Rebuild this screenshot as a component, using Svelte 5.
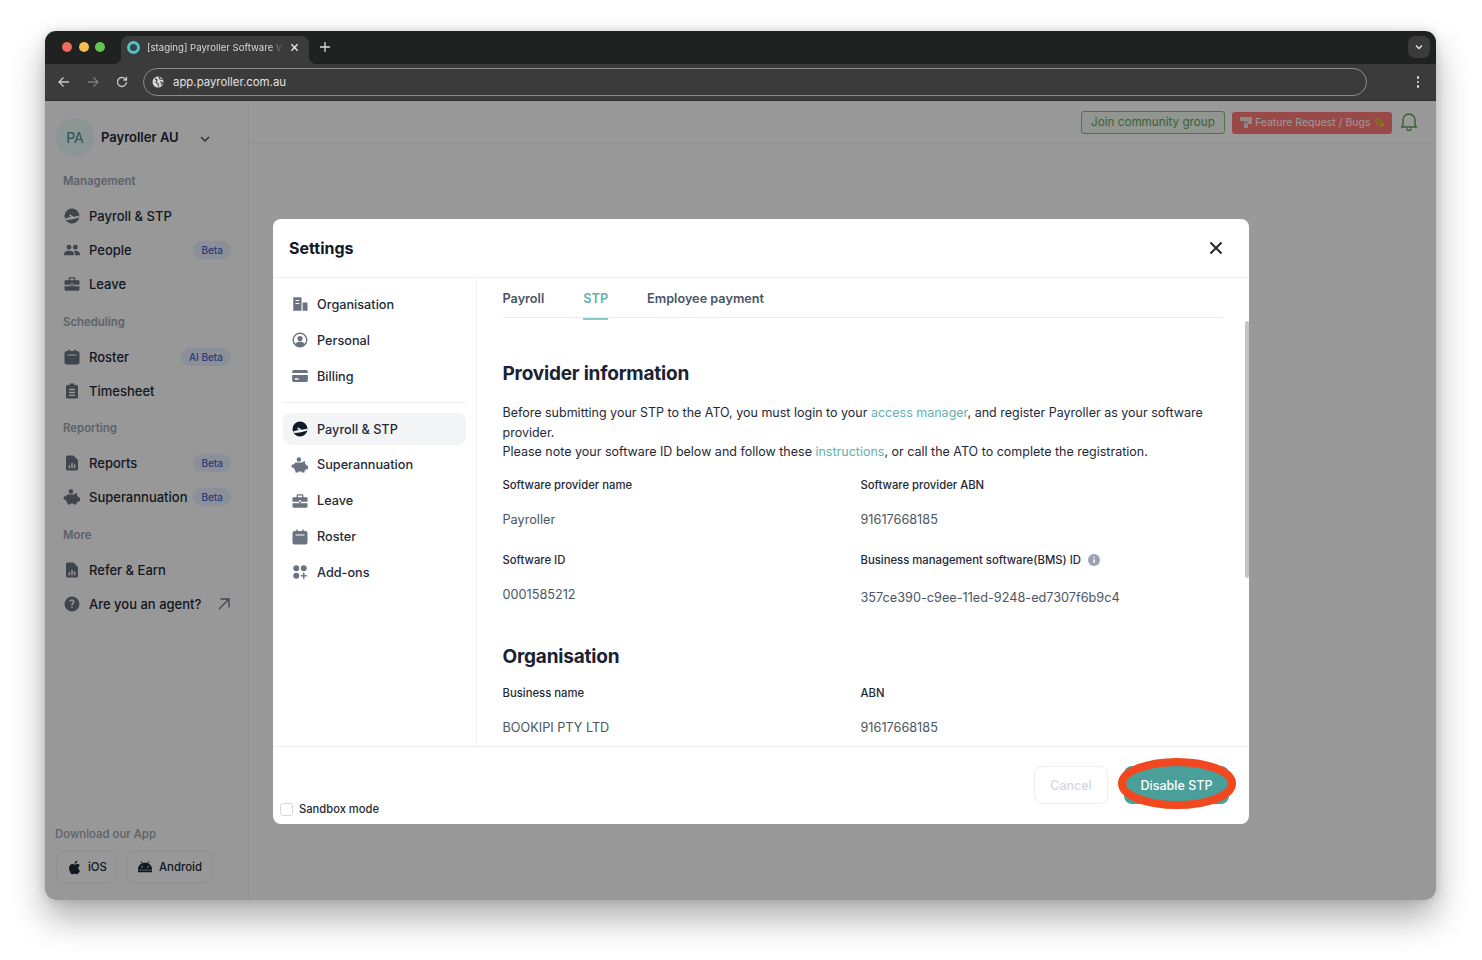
<!--
  App.svelte — Payroller settings dialog inside a browser window.
-->
<script>
  const icons = {
    stp: 'M12 2a10 10 0 1 0 0 20 10 10 0 0 0 0-20zM2.800 15.200c2.700-.8 5.200-1.400 7.700-1.800L8 10.700l2-.6 4 2.800 7.600-1.400c.2.800.1 1.700-.1 2.400-5.500 1.800-11.500 3-17.500 3.300-.5-.7-.9-1.500-1.200-2z',
    people: 'M8 5a3.200 3.200 0 1 1 0 6.400A3.200 3.200 0 0 1 8 5zm8.500 0a3.200 3.200 0 1 1 0 6.400 3.200 3.200 0 0 1 0-6.400zM1.500 19v-2.200c0-2.300 3-3.900 6.500-3.900s6.500 1.600 6.500 3.900V19zm14.500 0v-2.200c0-1.500-.7-2.700-1.800-3.600 3.700-.8 8.300.8 8.300 3.600V19z',
    leave: 'M9 3h6a1.500 1.500 0 0 1 1.500 1.500V7H21a1 1 0 0 1 1 1v5H2V8a1 1 0 0 1 1-1h4.500V4.500A1.500 1.500 0 0 1 9 3zm.3 1.800V7h5.400V4.800zM10.500 11v3.500h3V11zM2 15h20v4a2 2 0 0 1-2 2H4a2 2 0 0 1-2-2z',
    roster: 'M7 2h2v2h6V2h2v2h2a3 3 0 0 1 3 3v12a3 3 0 0 1-3 3H5a3 3 0 0 1-3-3V7a3 3 0 0 1 3-3h2zM6 8.500V10h12V8.500z',
    sheet: 'M9 2h6v2h3a2 2 0 0 1 2 2v14a2 2 0 0 1-2 2H6a2 2 0 0 1-2-2V6a2 2 0 0 1 2-2h3zM8 9v2h8V9zm0 4v2h8v-2zm0 4v1.500h8V17z',
    report: 'M6 2h8l6 6v12a2 2 0 0 1-2 2H6a2 2 0 0 1-2-2V4a2 2 0 0 1 2-2zm1.500 13v4h2v-4zm3.500-3v7h2v-7zm3.500 2v5h2v-5z',
    piggy: 'M10.500 1.500a3 3 0 1 1 0 6 3 3 0 0 1 0-6zM6.500 8.500h8c1.200-1 2.700-1.500 4.500-1.500l-.4 3c1 .8 1.700 1.600 2 2.500h2v5h-2.500c-.6 1-1.300 1.700-2.100 2.300V22h-4v-1.500h-4V22h-4v-2.500C4.800 18.500 4 17 3.800 15.500H1c-.6-1.500-.2-3.500 1-5l1.500 1.300C4.200 10 5.200 9 6.500 8.500z',
    help: 'M12 2a10 10 0 1 0 0 20 10 10 0 0 0 0-20zm-1 15v-2h2v2zm3.700-6.500c-.7 1-1.700 1.300-1.700 2.900h-2c0-2.500 1.300-3 2-3.800.7-.9.1-2.100-1-2.100-1 0-1.600.6-1.800 1.600l-1.900-.7C8.700 6.800 10.100 6 12 6c3 0 4.200 2.700 2.700 4.500z',
    building: 'M3 3h11v18H3zm3 3.500V8h5V6.500zm0 4V12h5v-1.500zM15.500 10H21a1 1 0 0 1 1 1v10h-6.500z',
    user: 'M12 2a10 10 0 1 0 0 20 10 10 0 0 0 0-20zm0 2a8 8 0 0 1 6.300 12.900C16.700 15 14.500 14.200 12 14.200S7.300 15 5.700 16.900A8 8 0 0 1 12 4zm0 2.500a3.500 3.500 0 1 0 0 7 3.500 3.500 0 0 0 0-7z',
    card: 'M4 4h16a2.500 2.500 0 0 1 2.500 2.500V8h-21V6.500A2.500 2.500 0 0 1 4 4zM1.500 10.500h21v7A2.500 2.500 0 0 1 20 20H4a2.500 2.500 0 0 1-2.500-2.500zM5 15v2h5v-2z',
    addons: 'M7 3a4 4 0 1 1 0 8 4 4 0 0 1 0-8zm10 0a4 4 0 1 1 0 8 4 4 0 0 1 0-8zM7 13a4 4 0 1 1 0 8 4 4 0 0 1 0-8zm9 0h2v3h3v2h-3v3h-2v-3h-3v-2h3z',
    apple: 'M16.500 1c.1 1.300-.4 2.500-1.200 3.400-.8 1-2 1.700-3.200 1.600-.2-1.200.4-2.500 1.100-3.300C14 1.800 15.400 1.100 16.500 1zM20.700 17c-.5 1.200-.8 1.700-1.400 2.700-.9 1.400-2.100 3-3.600 3-1.300 0-1.700-.8-3.500-.8s-2.200.8-3.500.8c-1.500 0-2.700-1.500-3.500-2.900C3 15.900 2.700 11.400 4.300 9.100 5.400 7.500 7.100 6.500 8.700 6.500s2.700.9 4 .9 2.100-.9 4-.9c1.400 0 2.900.8 4 2.100-3.500 1.900-2.900 6.900 0 8.400z',
    android: 'M6.500 3l1.900 3.100A10 10 0 0 1 12 5.500c1.300 0 2.500.2 3.600.6L17.500 3l1 .6-1.800 3A9.500 9.500 0 0 1 22.500 16h-21a9.500 9.500 0 0 1 5.800-9.400l-1.800-3zM7.500 10.500a1.200 1.200 0 1 0 0 2.400 1.200 1.200 0 0 0 0-2.400zm9 0a1.200 1.200 0 1 0 0 2.400 1.200 1.200 0 0 0 0-2.400zM1.500 17h21v3h-21z'
  };

  const sideNav = [
    { label: 'Management', items: [
      { name: 'Payroll & STP', icon: 'stp' },
      { name: 'People', icon: 'people', badge: 'Beta' },
      { name: 'Leave', icon: 'leave' }
    ] },
    { label: 'Scheduling', items: [
      { name: 'Roster', icon: 'roster', badge: 'AI Beta' },
      { name: 'Timesheet', icon: 'sheet' }
    ] },
    { label: 'Reporting', items: [
      { name: 'Reports', icon: 'report', badge: 'Beta' },
      { name: 'Superannuation', icon: 'piggy', badge: 'Beta' }
    ] },
    { label: 'More', items: [
      { name: 'Refer & Earn', icon: 'report' },
      { name: 'Are you an agent?', icon: 'help', external: true }
    ] }
  ];

  const settingsTop = [
    { name: 'Organisation', icon: 'building' },
    { name: 'Personal', icon: 'user' },
    { name: 'Billing', icon: 'card' }
  ];

  const settingsBottom = [
    { name: 'Payroll & STP', icon: 'stp', active: true },
    { name: 'Superannuation', icon: 'piggy' },
    { name: 'Leave', icon: 'leave' },
    { name: 'Roster', icon: 'roster' },
    { name: 'Add-ons', icon: 'addons' }
  ];

  let tab = $state('STP');
</script>

{#snippet icon(name, size)}
  <svg class="ico" width={size} height={size} viewBox="0 0 24 24" aria-hidden="true">
    <path d={icons[name]} fill="currentColor" fill-rule="evenodd" />
  </svg>
{/snippet}

{#snippet settingsRow(item)}
  <div class="set-row" class:active={item.active}>
    <span class="set-ico">{@render icon(item.icon, 18)}</span>
    <span>{item.name}</span>
  </div>
{/snippet}

<div class="window">
  <div class="tabbar">
    <div class="lights">
      <i class="red"></i><i class="yellow"></i><i class="green"></i>
    </div>
    <div class="tab">
      <span class="favicon"></span>
      <span class="tab-title">[staging] Payroller Software W</span>
      <svg width="9" height="9" viewBox="0 0 10 10"><path d="M1.500 1.500l7 7m0-7l-7 7" stroke="#e8e8e8" stroke-width="1.500" /></svg>
    </div>
    <svg class="plus" width="10" height="10" viewBox="0 0 10 10"><path d="M5 0v10M0 5h10" stroke="#dcdcdc" stroke-width="1.300" /></svg>
    <div class="tab-menu">
      <svg width="8" height="6" viewBox="0 0 8 6"><path d="M1 1.500l3 3 3-3" fill="none" stroke="#e4e4e4" stroke-width="1.400" /></svg>
    </div>
  </div>

  <div class="toolbar">
    <svg width="14" height="14" viewBox="0 0 14 14"><path d="M12 7H2m4.500-4.500L2 7l4.500 4.500" fill="none" stroke="#c8c8c8" stroke-width="1.300" /></svg>
    <svg width="14" height="14" viewBox="0 0 14 14"><path d="M2 7h10M7.500 2.500L12 7l-4.500 4.500" fill="none" stroke="#7d7d7d" stroke-width="1.300" /></svg>
    <svg width="14" height="14" viewBox="0 0 14 14"><path d="M11.500 7a4.500 4.500 0 1 1-1.300-3.200L11.500 5M11.500 1.800V5H8.300" fill="none" stroke="#c8c8c8" stroke-width="1.300" /></svg>
    <div class="urlbar">
      <svg width="12" height="12" viewBox="0 0 12 12"><circle cx="6" cy="6" r="5.500" fill="#d6d6d6" /><path d="M3 2.500l2 1.500-1 2.500 2 1 .5 3M7 1l1 2 2.500.5M8 6l2.500.5-1 2.500" fill="none" stroke="#3b3b3b" stroke-width="1.100" /></svg>
      <span>app.payroller.com.au</span>
    </div>
    <div class="kebab"><i></i><i></i><i></i></div>
  </div>

  <div class="app">
    <aside class="sidebar">
      <div class="org">
        <span class="avatar">PA</span>
        <span class="org-name">Payroller AU</span>
        <svg class="org-caret" width="10" height="6" viewBox="0 0 10 6"><path d="M1 1l4 4 4-4" fill="none" stroke="#4b5563" stroke-width="1.500" /></svg>
      </div>

      {#each sideNav as group}
        <div class="side-label">{group.label}</div>
        <div class="side-group">
          {#each group.items as item}
            <div class="side-row">
              <span class="side-ico">{@render icon(item.icon, 18)}</span>
              <span class="side-name">{item.name}</span>
              {#if item.badge}<span class="badge">{item.badge}</span>{/if}
              {#if item.external}
                <svg class="ext" width="12" height="12" viewBox="0 0 12 12"><path d="M1 11L11 1M2.500 1H11v8.500" fill="none" stroke="#6b7280" stroke-width="1.300" /></svg>
              {/if}
            </div>
          {/each}
        </div>
      {/each}

      <div class="download">
        <div class="dl-label">Download our App</div>
        <div class="dl-row">
          <span class="dl-btn ios">{@render icon('apple', 15)} iOS</span>
          <span class="dl-btn android">{@render icon('android', 16)} Android</span>
        </div>
      </div>
    </aside>

    <main class="main">
      <div class="topbar">
        <span class="join">Join community group</span>
        <span class="feature">
          <svg width="12" height="11" viewBox="0 0 12 11"><path d="M0 0h12v7H8v4H4V4H0z" fill="#f4e4e2" /><path d="M4 4h4v3H4z" fill="#e6bfbc" /></svg>
          Feature Request / Bugs
          <svg width="11" height="11" viewBox="0 0 11 11"><ellipse cx="5.500" cy="5.500" rx="5.500" ry="3" transform="rotate(40 5.500 5.500)" fill="#f2b64a" /><path d="M3 5l2.500-2M5 7.500l3-3" stroke="#8a5a20" stroke-width="0.800" /></svg>
        </span>
        <svg class="bell" width="18" height="19" viewBox="0 0 18 19"><path d="M3 13.500V8a6 6 0 0 1 12 0v5.500l1.500 1.500h-15zM7 16.500a2 2 0 0 0 4 0" fill="none" stroke="#5fa35f" stroke-width="1.500" stroke-linejoin="round" /></svg>
      </div>
    </main>

    <div class="overlay">
      <div class="modal">
        <header class="modal-head">
          <h1>Settings</h1>
          <svg width="14" height="14" viewBox="0 0 14 14"><path d="M1.500 1.500l11 11m0-11l-11 11" stroke="#1f2937" stroke-width="2" /></svg>
        </header>

        <div class="modal-body">
          <nav class="set-nav">
            <div class="set-group">
              {#each settingsTop as item}{@render settingsRow(item)}{/each}
            </div>
            <div class="set-group lower">
              {#each settingsBottom as item}{@render settingsRow(item)}{/each}
            </div>
          </nav>

          <section class="panel">
            <div class="tabs">
              {#each ['Payroll', 'STP', 'Employee payment'] as t}
                <button class="tab-btn" class:on={tab === t} onclick={() => (tab = t)}>{t}</button>
              {/each}
            </div>

            <h2 class="first">Provider information</h2>
            <p class="intro">
              Before submitting your STP to the ATO, you must login to your <a href="#top">access manager</a>, and register Payroller as your software provider.<br />
              Please note your software ID below and follow these <a href="#top">instructions</a>, or call the ATO to complete the registration.
            </p>

            <div class="fields">
              <div class="field">
                <div class="f-label">Software provider name</div>
                <div class="f-value">Payroller</div>
              </div>
              <div class="field">
                <div class="f-label">Software provider ABN</div>
                <div class="f-value">91617668185</div>
              </div>
              <div class="field">
                <div class="f-label">Software ID</div>
                <div class="f-value">0001585212</div>
              </div>
              <div class="field">
                <div class="f-label">
                  Business management software(BMS) ID
                  <svg width="12" height="12" viewBox="0 0 12 12"><circle cx="6" cy="6" r="6" fill="#9ca3af" /><path d="M6 5.300v3.700M6 2.800v1.300" stroke="#fff" stroke-width="1.400" /></svg>
                </div>
                <div class="f-value lowered">357ce390-c9ee-11ed-9248-ed7307f6b9c4</div>
              </div>
            </div>

            <h2>Organisation</h2>
            <div class="fields">
              <div class="field">
                <div class="f-label">Business name</div>
                <div class="f-value">BOOKIPI PTY LTD</div>
              </div>
              <div class="field">
                <div class="f-label">ABN</div>
                <div class="f-value">91617668185</div>
              </div>
            </div>

            <div class="thumb"></div>
          </section>
        </div>

        <footer class="modal-foot">
          <label class="sandbox"><span class="check"></span>Sandbox mode</label>
          <div class="actions">
            <button class="cancel">Cancel</button>
            <button class="disable">
              Disable STP
              <svg class="ring" width="120" height="54" viewBox="0 0 120 54"><ellipse cx="60" cy="26.500" rx="55" ry="21.500" fill="none" stroke="#f2471f" stroke-width="8" /></svg>
            </button>
          </div>
        </footer>
      </div>
    </div>
  </div>
</div>

<style>
  :global(body) {
    background: #fff;
    font-family: Inter, "Liberation Sans", sans-serif;
  }

  .window {
    width: 1391px;
    height: 869px;
    margin: 31px 0 60px 45px;
    border-radius: 11px;
    overflow: hidden;
    display: flex;
    flex-direction: column;
    box-shadow: 0 18px 34px rgba(0, 0, 0, 0.32), 0 0 10px rgba(0, 0, 0, 0.14);
  }

  /* browser chrome */
  .tabbar {
    height: 33px;
    flex: none;
    background: #202221;
    display: flex;
    align-items: flex-end;
    position: relative;
  }

  .lights {
    display: flex;
    gap: 6.5px;
    padding: 0 0 12px 17px;
    width: 76px;
    box-sizing: border-box;
  }

  .lights i {
    width: 10px;
    height: 10px;
    border-radius: 50%;
  }

  .red { background: #ee6a5f; }
  .yellow { background: #f5bd4f; }
  .green { background: #62c554; }

  .tab {
    position: relative;
    width: 188px;
    height: 28px;
    background: #3b3b3b;
    border-radius: 8px 8px 0 0;
    display: flex;
    align-items: center;
    padding: 0 8px 6px 6px;
    box-sizing: border-box;
    gap: 7px;
  }

  .tab::before,
  .tab::after {
    content: "";
    position: absolute;
    bottom: 0;
    width: 8px;
    height: 8px;
  }

  .tab::before {
    left: -8px;
    background: radial-gradient(circle at 0 0, transparent 8px, #3b3b3b 8.5px);
  }

  .tab::after {
    right: -8px;
    background: radial-gradient(circle at 100% 0, transparent 8px, #3b3b3b 8.5px);
  }

  .favicon {
    width: 13px;
    height: 13px;
    border-radius: 50%;
    border: 3.5px solid #56c1c4;
    background: #33474a;
    box-sizing: border-box;
    flex: none;
  }

  .tab-title {
    font-size: 9.6px;
    color: #d8d8d8;
    white-space: nowrap;
    width: 136px;
    flex: none;
    overflow: hidden;
    -webkit-mask-image: linear-gradient(to right, #000 90%, transparent);
    mask-image: linear-gradient(to right, #000 90%, transparent);
  }

  .plus {
    margin: 0 0 12px 11px;
  }

  .tab-menu {
    position: absolute;
    right: 6px;
    top: 5px;
    width: 22px;
    height: 22px;
    border-radius: 7px;
    background: #3b3b3b;
    display: flex;
    align-items: center;
    justify-content: center;
  }

  .toolbar {
    height: 37px;
    flex: none;
    background: #3b3b3b;
    display: flex;
    align-items: center;
    padding: 0 16px 0 12px;
    box-sizing: border-box;
    gap: 15px;
    border-bottom: 1px solid #2f2f2f;
  }

  .urlbar {
    width: 1224px;
    height: 28px;
    border: 1px solid #8c8c8c;
    border-radius: 14px;
    box-sizing: border-box;
    display: flex;
    align-items: center;
    gap: 9px;
    padding-left: 8px;
    margin-left: -1px;
    font-size: 11.4px;
    color: #e2e2e2;
  }

  .kebab {
    margin-left: auto;
    display: flex;
    flex-direction: column;
    gap: 2px;
    padding-right: 1px;
  }

  .kebab i {
    width: 2.5px;
    height: 2.5px;
    border-radius: 50%;
    background: #dcdcdc;
  }

  /* app behind the dialog */
  .app {
    flex: 1;
    display: flex;
    position: relative;
    background: #fff;
    min-height: 0;
  }

  .sidebar {
    width: 204px;
    flex: none;
    box-sizing: border-box;
    border-right: 1px solid #f0f0f0;
    padding: 17px 0 17px 11px;
    display: flex;
    flex-direction: column;
    background: #fdfdfd;
  }

  .org {
    display: flex;
    align-items: center;
    height: 38px;
    margin-bottom: 15px;
  }

  .avatar {
    width: 38px;
    height: 38px;
    border-radius: 50%;
    background: #e8f8f6;
    color: #3f8f85;
    font-size: 14px;
    display: flex;
    align-items: center;
    justify-content: center;
    margin-right: 7px;
  }

  .org-name {
    font-size: 13px;
    font-weight: 600;
    color: #1f2937;
    margin-right: 21px;
  }

  .org-caret {
    margin-top: 3px;
  }

  .side-label {
    height: 19px;
    padding-top: 1px;
    line-height: 19px;
    font-size: 11.4px;
    font-weight: 600;
    color: #9ca3af;
    margin: 0 0 8px 7px;
  }

  .side-group {
    margin-bottom: 10.5px;
  }

  .side-row {
    height: 34px;
    display: flex;
    align-items: center;
    padding: 0 17px 0 7px;
    font-size: 13px;
    font-weight: 500;
    color: #1f2937;
  }

  .side-ico {
    display: flex;
    color: #6b7280;
    margin-right: 8px;
  }

  .side-name {
    white-space: nowrap;
  }

  .badge {
    margin-left: auto;
    height: 18px;
    line-height: 18px;
    padding: 0 8px;
    border-radius: 9px;
    background: #e6eeff;
    color: #4a64c8;
    font-size: 10px;
    font-weight: 500;
    white-space: nowrap;
  }

  .ext {
    margin-left: auto;
    margin-right: 1px;
  }

  .download {
    margin-top: auto;
  }

  .dl-label {
    font-size: 11.4px;
    font-weight: 500;
    color: #9ca3af;
    margin: 0 0 10px -1px;
  }

  .dl-row {
    display: flex;
    gap: 9px;
  }

  .dl-btn {
    height: 32px;
    box-sizing: border-box;
    border: 1px solid #f0f0f0;
    border-radius: 8px;
    display: flex;
    align-items: center;
    gap: 6px;
    font-size: 11.4px;
    font-weight: 500;
    color: #1f2937;
  }

  .ios {
    width: 61px;
    padding-left: 10px;
  }

  .android {
    width: 86px;
    padding-left: 10px;
  }

  .main {
    flex: 1;
    background: #fff;
  }

  .topbar {
    height: 43px;
    box-sizing: border-box;
    border-bottom: 1px solid #f3f3f3;
    display: flex;
    align-items: center;
    justify-content: flex-end;
    padding: 1px 18px 0 0;
  }

  .join {
    height: 23px;
    line-height: 21px;
    box-sizing: border-box;
    padding: 0 9.5px;
    border: 1px solid #7fc07f;
    background: #f3fbf0;
    border-radius: 3px;
    color: #5fa85a;
    font-size: 11.7px;
    margin-right: 7px;
  }

  .feature {
    height: 22px;
    box-sizing: border-box;
    padding: 0 7.5px;
    background: #ff7b77;
    border-radius: 3px;
    color: #fff;
    font-size: 10.5px;
    display: flex;
    align-items: center;
    gap: 3px;
    margin-right: 8px;
  }

  .bell {
    margin-top: -2px;
  }

  .overlay {
    position: absolute;
    inset: 0;
    background: rgba(0, 0, 0, 0.4);
    padding: 118px 0 0 228px;
  }

  /* dialog */
  .modal {
    width: 976px;
    height: 605px;
    background: #fff;
    border-radius: 8px;
    display: flex;
    flex-direction: column;
    overflow: hidden;
  }

  .modal-head {
    height: 59px;
    flex: none;
    box-sizing: border-box;
    padding: 0 26px 0 16px;
    border-bottom: 1px solid #f0f0f2;
    display: flex;
    align-items: center;
    justify-content: space-between;
  }

  h1 {
    margin: 0;
    font-size: 16px;
    font-weight: 700;
    color: #111827;
  }

  .modal-body {
    height: 468px;
    flex: none;
    display: flex;
    overflow: hidden;
  }

  .set-nav {
    width: 204px;
    flex: none;
    box-sizing: border-box;
    border-right: 1px solid #f0f0f2;
    padding: 8px 10px 0;
  }

  .set-group.lower {
    border-top: 1px solid #eceef0;
    margin-top: 8px;
    padding-top: 10px;
  }

  .set-row {
    height: 36px;
    display: flex;
    align-items: center;
    padding-left: 8px;
    font-size: 12.7px;
    font-weight: 500;
    color: #1f2937;
    border-radius: 8px;
  }

  .lower .set-row:not(.active) {
    height: 35.85px;
  }

  .set-row.active {
    height: 32px;
    margin-bottom: 2px;
    background: #f3f4f6;
  }

  .set-ico {
    display: flex;
    color: #6b7280;
    margin-right: 8px;
  }

  .set-row.active .set-ico {
    color: #111827;
  }

  .panel {
    flex: 1;
    position: relative;
    padding: 0 26px 0 25.5px;
    min-width: 0;
  }

  .tabs {
    display: flex;
    gap: 39px;
    height: 39px;
    border-bottom: 1px solid #e8eaed;
  }

  .tab-btn {
    all: unset;
    position: relative;
    height: 39px;
    line-height: 42px;
    font-size: 12.7px;
    font-weight: 600;
    color: #4b5563;
    cursor: pointer;
  }

  .tab-btn.on {
    color: #5fb3ad;
  }

  .tab-btn.on::after {
    content: "";
    position: absolute;
    left: 0;
    right: 0;
    bottom: -3px;
    height: 2px;
    background: #8accc6;
  }

  h2 {
    margin: 32px 0 0;
    height: 26px;
    line-height: 26px;
    font-size: 19px;
    font-weight: 700;
    color: #1a2233;
    letter-spacing: -0.2px;
  }

  h2.first {
    margin-top: 43px;
  }

  .intro {
    margin: 16px 0 0;
    font-size: 12.5px;
    line-height: 19.5px;
    color: #1f2937;
  }

  .intro a {
    color: #5fb3ad;
    text-decoration: none;
  }

  .fields {
    display: grid;
    grid-template-columns: 358px 1fr;
    margin-top: 13px;
  }

  .field {
    height: 75px;
  }

  .f-label {
    height: 20px;
    line-height: 20px;
    font-size: 11.3px;
    font-weight: 500;
    color: #1f2937;
    display: flex;
    align-items: center;
    gap: 7px;
  }

  .f-value {
    margin-top: 15px;
    height: 20px;
    line-height: 20px;
    font-size: 12.7px;
    color: #4b5563;
  }

  .f-value.lowered {
    margin-top: 18px;
  }

  .fields .field:nth-child(n + 3) {
    height: 62px;
  }

  .thumb {
    position: absolute;
    right: 0;
    top: 43px;
    width: 4px;
    height: 257px;
    background: #c4c4c4;
    border-radius: 2px;
  }

  .modal-foot {
    flex: 1;
    box-sizing: border-box;
    border-top: 1px solid #eceef2;
    display: flex;
    justify-content: space-between;
    padding: 0 20px 0 7px;
  }

  .sandbox {
    align-self: flex-end;
    display: flex;
    align-items: center;
    gap: 6px;
    font-size: 11.2px;
    font-weight: 500;
    color: #1f2937;
    height: 14px;
    margin-bottom: 8px;
  }

  .check {
    width: 13px;
    height: 13px;
    box-sizing: border-box;
    border: 1px solid #d5d8de;
    border-radius: 3px;
  }

  .actions {
    display: flex;
    gap: 16px;
    padding-top: 19px;
  }

  .cancel,
  .disable {
    font: 500 12.5px Inter, "Liberation Sans", sans-serif;
    height: 38px;
    border-radius: 8px;
  }

  .cancel {
    width: 74px;
    background: #fff;
    border: 1px solid #eeeff2;
    color: #d5d8df;
  }

  .disable {
    position: relative;
    width: 105px;
    background: #4a9f9a;
    border: none;
    color: #fff;
  }

  .ring {
    position: absolute;
    left: -7px;
    top: -9px;
    pointer-events: none;
  }
</style>
